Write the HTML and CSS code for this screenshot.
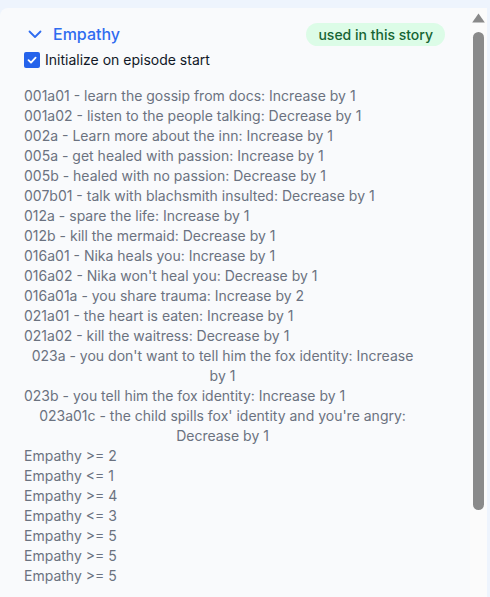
FILE: index.html
```html
<!DOCTYPE html>
<html>
<head>
<meta charset="utf-8">
<link rel="stylesheet" href="styles.css">
</head>
<body>
<div class="frame">
  <div class="card">
    <div class="content">
      <div class="header">
        <div class="title">
          <svg class="chev" width="14" height="9" viewBox="0 0 14 9"><path d="M1.5 1.5 L7 7 L12.5 1.5" fill="none" stroke="#2f6cf0" stroke-width="1.8" stroke-linecap="round" stroke-linejoin="round"/></svg>
          <span class="name">Empathy</span>
        </div>
        <span class="badge">used in this story</span>
      </div>
      <label class="init"><span class="box"><svg width="12" height="12" viewBox="0 0 12 12"><path d="M2.5 6.2 L5 8.6 L9.6 3.6" fill="none" stroke="#fff" stroke-width="1.8" stroke-linecap="round" stroke-linejoin="round"/></svg></span>Initialize on episode start</label>
      <div class="list">
        <span class="item">001a01 - learn the gossip from docs: Increase by 1</span>
        <span class="item">001a02 - listen to the people talking: Decrease by 1</span>
        <span class="item">002a - Learn more about the inn: Increase by 1</span>
        <span class="item">005a - get healed with passion: Increase by 1</span>
        <span class="item">005b - healed with no passion: Decrease by 1</span>
        <span class="item">007b01 - talk with blachsmith insulted: Decrease by 1</span>
        <span class="item">012a - spare the life: Increase by 1</span>
        <span class="item">012b - kill the mermaid: Decrease by 1</span>
        <span class="item">016a01 - Nika heals you: Increase by 1</span>
        <span class="item">016a02 - Nika won't heal you: Decrease by 1</span>
        <span class="item">016a01a - you share trauma: Increase by 2</span>
        <span class="item">021a01 - the heart is eaten: Increase by 1</span>
        <span class="item">021a02 - kill the waitress: Decrease by 1</span>
        <span class="item">023a - you don't want to tell him the fox identity: Increase by 1</span>
        <span class="item">023b - you tell him the fox identity: Increase by 1</span>
        <span class="item">023a01c - the child spills fox' identity and you're angry: Decrease by 1</span>
        <span class="item">Empathy &gt;= 2</span>
        <span class="item">Empathy &lt;= 1</span>
        <span class="item">Empathy &gt;= 4</span>
        <span class="item">Empathy &lt;= 3</span>
        <span class="item">Empathy &gt;= 5</span>
        <span class="item">Empathy &gt;= 5</span>
        <span class="item">Empathy &gt;= 5</span>
      </div>
    </div>
    <div class="scrollbar">
      <svg class="arrow" width="13" height="10" viewBox="0 0 13 10"><polygon points="6.5,0.5 12.8,9.5 0.2,9.5" fill="#8a8a8a"/></svg>
      <div class="thumb"></div>
    </div>
  </div>
</div>
</body>
</html>
```
FILE: styles.css
```css
html, body {
  margin: 0;
  padding: 0;
  height: 100%;
  overflow: hidden;
}
body {
  background: #eef4fd;
  font-family: Inter, "Noto Sans", sans-serif;
  font-size: 14px;
}
.frame {
  padding-top: 8px;
  padding-right: 3px;
  height: 100%;
  box-sizing: border-box;
}
.card {
  height: 100%;
  box-sizing: border-box;
  background: #f9fafc;
  border-top-left-radius: 8px;
  display: flex;
  overflow: hidden;
}
.content {
  flex: 1;
  min-width: 0;
  padding: 14px 25px 20px 24px;
}
.scrollbar {
  width: 17px;
  flex: none;
  background: #fbfbfb;
  display: flex;
  flex-direction: column;
  align-items: center;
  padding-top: 5px;
}
.arrow {
  display: block;
}
.thumb {
  margin-top: 9px;
  width: 11px;
  height: 478px;
  background: #8a8a8a;
  border-radius: 6px;
}
.header {
  display: flex;
  align-items: center;
  justify-content: space-between;
  height: 24px;
}
.title {
  display: flex;
  align-items: center;
}
.chev {
  margin-left: 4px;
  margin-right: 11px;
}
.name {
  color: #2f6cf0;
  font-size: 16px;
  font-weight: 500;
}
.badge {
  background: #dcfce7;
  color: #166534;
  font-weight: 500;
  font-size: 14px;
  line-height: 23px;
  padding: 0 12px;
  border-radius: 12px;
}
.init {
  display: flex;
  align-items: center;
  margin-top: 4px;
  color: #111827;
  font-size: 14px;
  line-height: 20px;
}
.box {
  width: 16px;
  height: 16px;
  background: #2563eb;
  border-radius: 2px;
  display: flex;
  align-items: center;
  justify-content: center;
  margin-right: 5px;
}
.list {
  margin-top: 16px;
  display: flex;
  flex-direction: column;
  align-items: flex-start;
  max-width: 397px;
}
.item {
  color: #6b7280;
  line-height: 20px;
  text-align: center;
}
```
